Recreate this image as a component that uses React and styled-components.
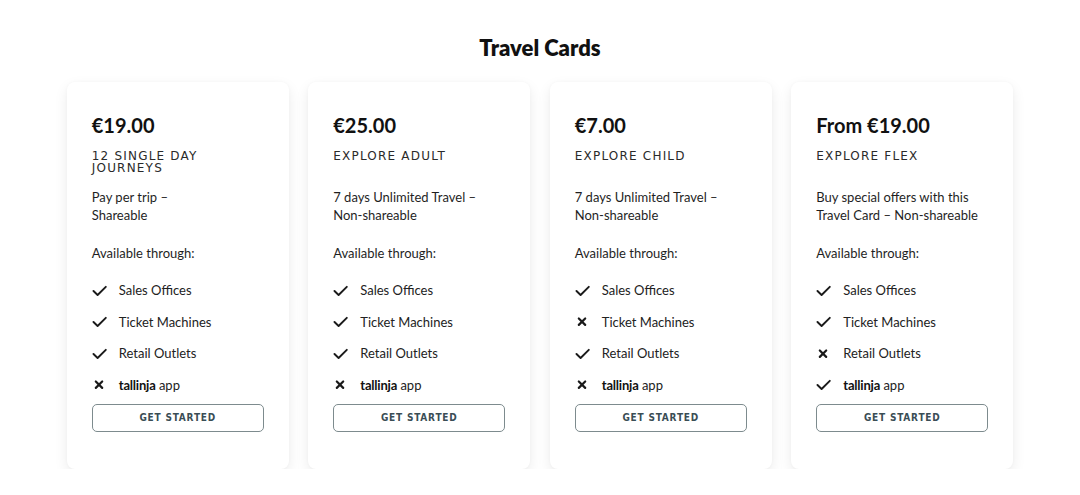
import React from 'react';
import styled, { createGlobalStyle } from 'styled-components';

const GlobalStyle = createGlobalStyle`
  body {
    margin: 0;
    background: #ffffff;
    font-family: Lato, "Open Sans", sans-serif;
    color: #1c1c1c;
  }
`;

const cards = [
  {
    price: '€19.00',
    name: '12 SINGLE DAY JOURNEYS',
    desc: ['Pay per trip –', 'Shareable'],
    avail: [true, true, true, false],
  },
  {
    price: '€25.00',
    name: 'EXPLORE ADULT',
    desc: ['7 days Unlimited Travel –', 'Non-shareable'],
    avail: [true, true, true, false],
  },
  {
    price: '€7.00',
    name: 'EXPLORE CHILD',
    desc: ['7 days Unlimited Travel –', 'Non-shareable'],
    avail: [true, false, true, false],
  },
  {
    price: 'From €19.00',
    name: 'EXPLORE FLEX',
    desc: ['Buy special offers with this', 'Travel Card – Non-shareable'],
    avail: [true, true, false, true],
  },
];

const channels = ['Sales Offices', 'Ticket Machines', 'Retail Outlets', 'app'];

function CheckIcon() {
  return (
    <svg width="15" height="13" viewBox="0 0 15 13">
      <path d="M1.5 7 L5.6 11 L13.8 2.8" fill="none" stroke="#1a1a1a" strokeWidth="1.9" strokeLinecap="round" strokeLinejoin="round" />
    </svg>
  );
}

function CrossIcon() {
  return (
    <svg width="15" height="13" viewBox="0 0 15 13">
      <path d="M3.8 3.5 L10.2 9.9 M10.2 3.5 L3.8 9.9" fill="none" stroke="#1a1a1a" strokeWidth="2.2" strokeLinecap="round" />
    </svg>
  );
}

export default function App() {
  return (
    <Page>
      <GlobalStyle />
      <Title>Travel Cards</Title>
      <CardRow>
        {cards.map((c) => (
          <Card key={c.name}>
            <Price>{c.price}</Price>
            <Name>{c.name}</Name>
            <Desc>
              {c.desc[0]}
              <br />
              {c.desc[1]}
            </Desc>
            <Available>Available through:</Available>
            <List>
              {channels.map((ch, i) => (
                <Item key={ch}>
                  <IconBox>{c.avail[i] ? <CheckIcon /> : <CrossIcon />}</IconBox>
                  {ch === 'app' ? (
                    <span>
                      <Brand>tallinja</Brand> app
                    </span>
                  ) : (
                    ch
                  )}
                </Item>
              ))}
            </List>
            <StartButton>GET STARTED</StartButton>
          </Card>
        ))}
      </CardRow>
    </Page>
  );
}

const Page = styled.div`
  padding-top: 35px;
  display: flex;
  flex-direction: column;
  align-items: center;
`;

const Title = styled.h1`
  margin: 0;
  font-size: 22px;
  line-height: 26px;
  font-weight: 800;
  color: #111;
`;

const CardRow = styled.div`
  margin-top: 21px;
  display: flex;
  gap: 19.5px;
`;

const Card = styled.div`
  width: 222px;
  box-sizing: border-box;
  padding: 31px 25px 37px;
  background: #fff;
  border-radius: 8px;
  box-shadow: 0 5px 14px rgba(0, 0, 0, 0.08), 0 0 3px rgba(0, 0, 0, 0.03);
  display: flex;
  flex-direction: column;
`;

const Price = styled.div`
  font-size: 20px;
  line-height: 24px;
  font-weight: 700;
  color: #111;
`;

const Name = styled.div`
  margin-top: 13px;
  min-height: 24px;
  font-family: "DejaVu Sans", Verdana, sans-serif;
  font-size: 12px;
  line-height: 12px;
  letter-spacing: 1.2px;
  color: #2a2a2a;
`;

const Desc = styled.div`
  margin-top: 14px;
  font-size: 13px;
  line-height: 18px;
  color: #1f1f1f;
`;

const Available = styled.div`
  margin-top: 20px;
  font-size: 13px;
  line-height: 18px;
  color: #1f1f1f;
`;

const List = styled.ul`
  list-style: none;
  margin: 19px 0 0;
  padding: 0;
  display: flex;
  flex-direction: column;
  gap: 13.5px;
`;

const Item = styled.li`
  display: flex;
  align-items: center;
  font-size: 13px;
  line-height: 18px;
  color: #222;
`;

const IconBox = styled.span`
  width: 27px;
  display: flex;
  align-items: center;
  flex-shrink: 0;
`;

const Brand = styled.span`
  font-weight: 700;
  color: #111;
  letter-spacing: -0.2px;
`;

const StartButton = styled.button`
  margin-top: 10px;
  height: 28px;
  width: 100%;
  background: #fff;
  border: 1.5px solid #7d8b8e;
  border-radius: 5px;
  font-family: "DejaVu Sans Condensed", "DejaVu Sans", sans-serif;
  font-size: 10px;
  font-weight: 700;
  letter-spacing: 0.8px;
  color: #3a4d55;
  cursor: pointer;
`;
